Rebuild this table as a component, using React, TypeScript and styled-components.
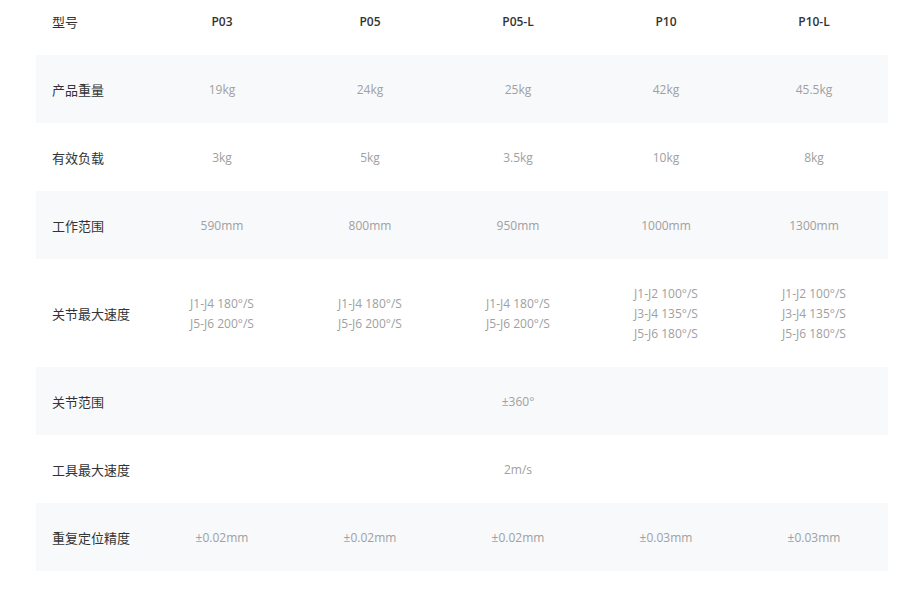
import styled, { createGlobalStyle } from "styled-components";

const GlobalStyle = createGlobalStyle`
  html, body {
    margin: 0;
    padding: 0;
    background: #ffffff;
  }
  body {
    font-family: "Open Sans", "Noto Sans", "Noto Sans CJK SC", sans-serif;
  }
`;

const Page = styled.div`
  width: 900px;
  height: 590px;
  overflow: hidden;
  padding: 0 12px 0 36px;
  box-sizing: border-box;
`;

const Table = styled.div`
  display: flex;
  flex-direction: column;
`;

const Row = styled.div<{ $striped?: boolean; $height: number; $header?: boolean }>`
  display: grid;
  grid-template-columns: 112px repeat(5, 148px);
  height: ${(p) => p.$height}px;
  align-items: center;
  background: ${(p) => (p.$striped ? "#f8f9fb" : "#ffffff")};
  padding-bottom: ${(p) => (p.$header ? "12px" : "0")};
  box-sizing: border-box;
`;

const Label = styled.div`
  padding-left: 16px;
  font-family: "Noto Sans CJK SC", sans-serif;
  font-size: 13px;
  color: #333333;
`;

const HeadCell = styled.div`
  text-align: center;
  font-family: "Open Sans", "Noto Sans", sans-serif;
  font-size: 12px;
  font-weight: 600;
  color: #333333;
`;

const Cell = styled.div<{ $span?: number }>`
  text-align: center;
  font-size: 12px;
  line-height: 20px;
  padding-top: 2px;
  color: #a0a0a0;
  grid-column: ${(p) => (p.$span ? `span ${p.$span}` : "auto")};
`;

type Spec = {
  label: string;
  values: string[][];
  height?: number;
  merged?: boolean;
};

const models = ["P03", "P05", "P05-L", "P10", "P10-L"];

const specs: Spec[] = [
  { label: "产品重量", values: [["19kg"], ["24kg"], ["25kg"], ["42kg"], ["45.5kg"]] },
  { label: "有效负载", values: [["3kg"], ["5kg"], ["3.5kg"], ["10kg"], ["8kg"]] },
  { label: "工作范围", values: [["590mm"], ["800mm"], ["950mm"], ["1000mm"], ["1300mm"]] },
  {
    label: "关节最大速度",
    height: 108,
    values: [
      ["J1-J4 180°/S", "J5-J6 200°/S"],
      ["J1-J4 180°/S", "J5-J6 200°/S"],
      ["J1-J4 180°/S", "J5-J6 200°/S"],
      ["J1-J2 100°/S", "J3-J4 135°/S", "J5-J6 180°/S"],
      ["J1-J2 100°/S", "J3-J4 135°/S", "J5-J6 180°/S"],
    ],
  },
  { label: "关节范围", merged: true, values: [["±360°"]] },
  { label: "工具最大速度", merged: true, values: [["2m/s"]] },
  {
    label: "重复定位精度",
    values: [["±0.02mm"], ["±0.02mm"], ["±0.02mm"], ["±0.03mm"], ["±0.03mm"]],
  },
];

const App = () => {
  return (
    <>
      <GlobalStyle />
      <Page>
        <Table>
          <Row $height={55} $header>
            <Label>型号</Label>
            {models.map((m) => (
              <HeadCell key={m}>{m}</HeadCell>
            ))}
          </Row>
          {specs.map((spec, i) => (
            <Row key={spec.label} $height={spec.height ?? 68} $striped={i % 2 === 0}>
              <Label>{spec.label}</Label>
              {spec.values.map((lines, j) => (
                <Cell key={j} $span={spec.merged ? 5 : undefined}>
                  {lines.map((line) => (
                    <div key={line}>{line}</div>
                  ))}
                </Cell>
              ))}
            </Row>
          ))}
        </Table>
      </Page>
    </>
  );
};

export default App;
